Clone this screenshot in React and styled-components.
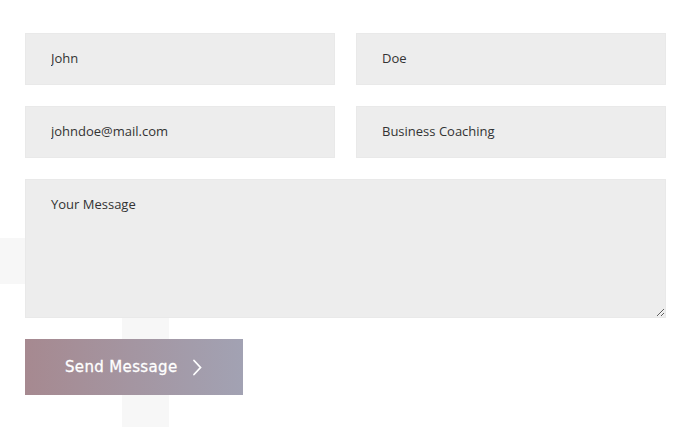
import React from "react";
import styled, { createGlobalStyle } from "styled-components";

const GlobalStyle = createGlobalStyle`
  body {
    margin: 0;
    background: #ffffff;
    font-family: "Open Sans", "Noto Sans", sans-serif;
  }
`;

const Page = styled.div`
  position: relative;
  width: 695px;
  height: 427px;
  overflow: hidden;
  background: #ffffff;
`;

const PlusBar = styled.div`
  position: absolute;
  background: #f7f7f7;
  z-index: 0;
`;

const Form = styled.form`
  position: relative;
  z-index: 1;
  display: grid;
  grid-template-columns: 310px 310px;
  column-gap: 21px;
  row-gap: 21px;
  padding: 33px 0 0 25px;
`;

const Field = styled.input`
  box-sizing: border-box;
  height: 52px;
  width: 100%;
  padding: 0 25px;
  border: 1px solid #e9e9e9;
  background: #ededed;
  font-family: "Open Sans", "Noto Sans", sans-serif;
  font-size: 13px;
  color: #333333;
  outline: none;
  padding-bottom: 2px;
`;

const Message = styled.textarea`
  grid-column: 1 / span 2;
  box-sizing: border-box;
  height: 139px;
  width: 100%;
  padding: 15px 25px;
  border: 1px solid #e9e9e9;
  background: #ededed;
  font-family: "Open Sans", "Noto Sans", sans-serif;
  font-size: 13px;
  color: #333333;
  outline: none;
  resize: vertical;
  margin: 0;
  display: block;
`;

const SendButton = styled.button`
  grid-column: 1;
  justify-self: start;
  display: flex;
  align-items: center;
  gap: 14px;
  width: 218px;
  height: 56px;
  padding: 0 0 0 40px;
  border: none;
  background: linear-gradient(90deg, #a68990 0%, #a2a2b3 100%);
  color: #ffffff;
  font-family: "DejaVu Sans", sans-serif;
  font-size: 15px;
  font-weight: 400;
  letter-spacing: 0.35px;
  -webkit-text-stroke: 0.3px #ffffff;
  cursor: pointer;
`;

const Chevron = () => (
  <svg width="10" height="17" viewBox="0 0 10 17" fill="none">
    <path d="M2 1.5 L8.5 8.5 L2 15.5" stroke="#ffffff" strokeWidth="1.8" strokeLinecap="round" />
  </svg>
);

export default function App() {
  return (
    <Page>
      <GlobalStyle />
      <PlusBar style={{ left: -30, top: 238, width: 350, height: 46 }} />
      <PlusBar style={{ left: 122, top: 190, width: 47, height: 260 }} />
      <Form onSubmit={(e) => e.preventDefault()}>
        <Field defaultValue="John" />
        <Field defaultValue="Doe" />
        <Field defaultValue="johndoe@mail.com" />
        <Field defaultValue="Business Coaching" />
        <Message defaultValue="Your Message" />
        <SendButton type="submit">
          Send Message
          <Chevron />
        </SendButton>
      </Form>
    </Page>
  );
}
